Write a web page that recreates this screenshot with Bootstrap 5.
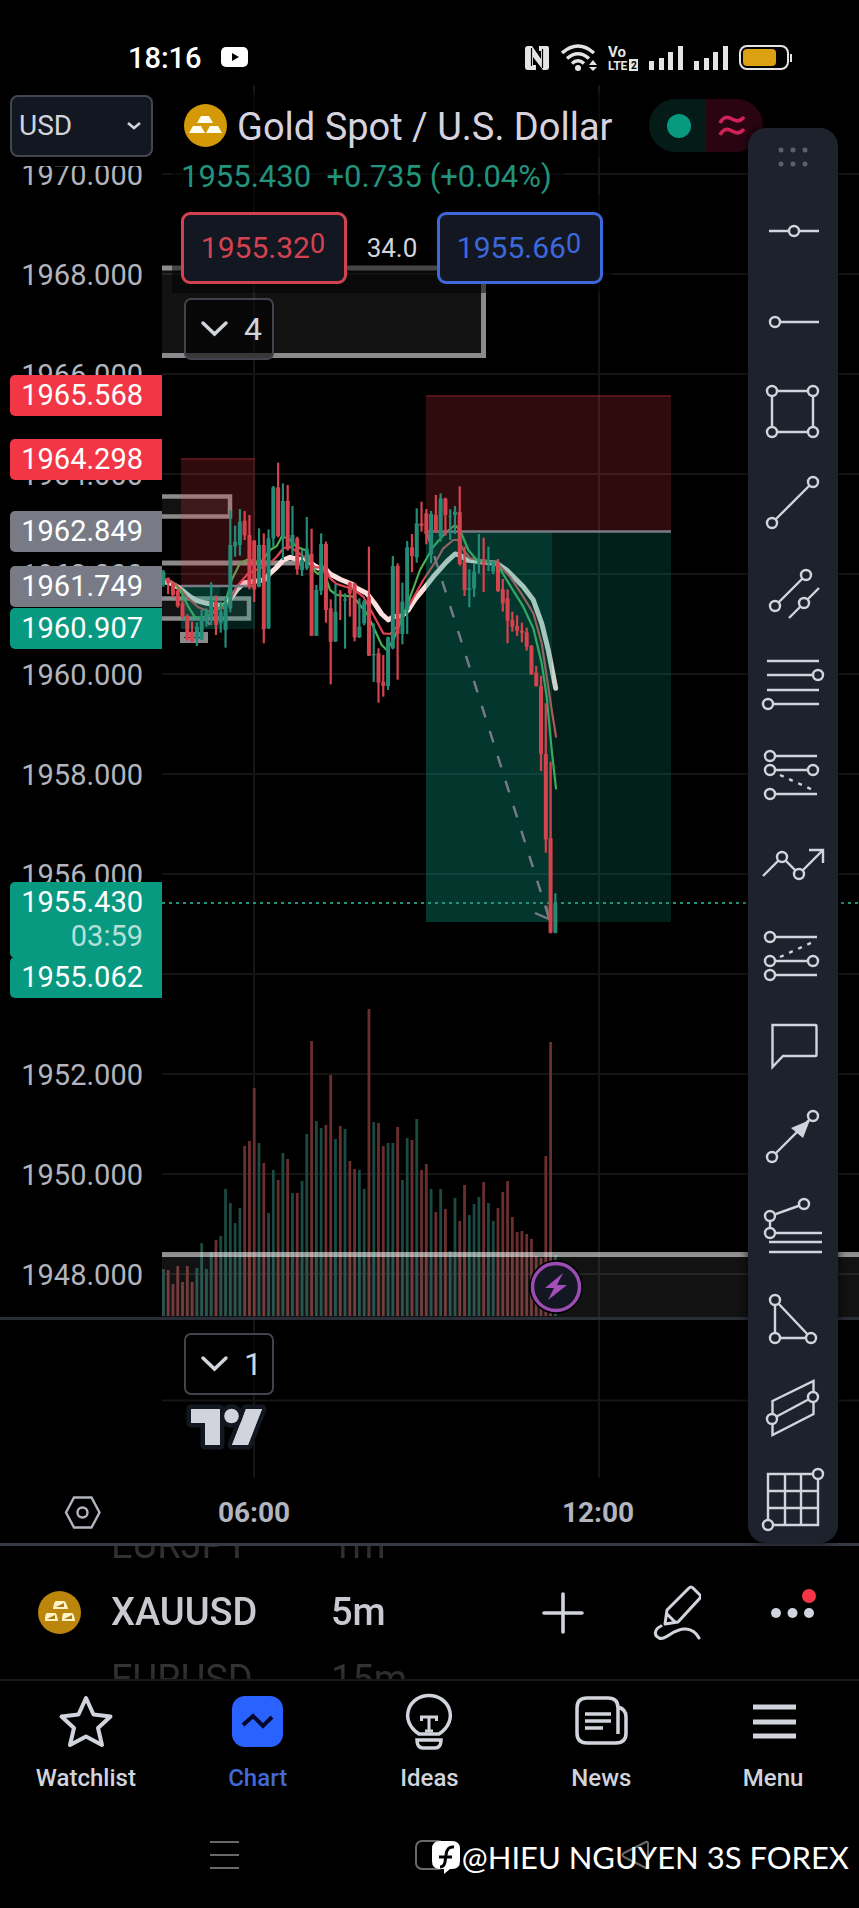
<!DOCTYPE html>
<html lang="en" data-bs-theme="dark">
<head>
<meta charset="utf-8">
<meta name="viewport" content="width=device-width, initial-scale=1">
<title>XAUUSD 5m – Gold Spot / U.S. Dollar</title>
<link href="https://cdn.jsdelivr.net/npm/bootstrap@5.3.0/dist/css/bootstrap.min.css" rel="stylesheet">
<style>
  :root { --axis: 162px; --fg: #d1d4dc; --muted: #b2b5be; --up: #089981; --down: #f23645; --line: #363a45; --panel: #1e222d; --ink: #131722; }
  body { background: #000; color: var(--fg); font-family: Roboto, "Liberation Sans", sans-serif; overflow-x: hidden; }
  svg { display: block; flex: none; }
  .ln { fill: none; stroke: currentColor; }
  button { color: inherit; }

  .status-bar { height: 85px; padding: 30px 66px 0 128px; color: #e4e4e4; }
  .status-bar time { font-size: 29px; font-weight: 500; color: #fff; line-height: 36px; }
  .status-icons { gap: 11px; }

  .price-axis { width: var(--axis); flex: none; font-size: 29px; color: var(--muted); }
  .currency { padding: 10px 9px 9px 10px; }
  .currency select { height: 62px; border: 2px solid #434651; border-radius: 8px; background-color: var(--ink); color: var(--fg); font-size: 28px; line-height: 36px; padding: 10px 30px 10px 7px;
    background-image: url("data:image/svg+xml,%3Csvg xmlns='http://www.w3.org/2000/svg' viewBox='0 0 16 16'%3E%3Cpath d='M2 5l6 5 6-5' fill='none' stroke='%23d1d4dc' stroke-width='2.6'/%3E%3C/svg%3E"); background-position: right 9px center; background-size: 16px; }
  .ticks { overflow: hidden; }
  .ticks ol { margin-top: -41px; margin-bottom: -8px; }
  .ticks li { height: 100px; line-height: 100px; padding-right: 19px; text-align: right; }
  .tag { position: absolute; left: 10px; right: 0; padding-right: 19px; line-height: 41px; text-align: right; border-radius: 5px 0 0 5px; color: #fff; }
  .tag-down { background: var(--down); } .tag-up { background: var(--up); } .tag-flat { background: #787b86; }
  .tag small { display: block; font-size: 29px; line-height: 27px; padding-bottom: 8px; color: #b5e0d9; }

  .plot { padding-left: 10px; overflow: hidden; }
  .plot > .canvas { position: absolute; inset: 0; width: 100%; height: 100%; }
  .legend { position: relative; }
  .legend-row { width: fit-content; background: rgba(0,0,0,.5); }
  .title-row { height: 65px; margin-top: 8px; padding-left: 12px; gap: 10px; }
  .title-row h1 { font-size: 38px; font-weight: 400; line-height: 44px; padding-top: 2px; color: #d6d3df; white-space: nowrap; }
  .quote-row { height: 36px; line-height: 38px; padding: 0 12px 0 9px; font-size: 31px; color: #22937c; white-space: pre; }
  .trade-row { padding: 18px 10px 9px 9px; }
  .trade { width: 166px; height: 72px; border: 3px solid; border-radius: 9px; background: var(--ink); font-size: 30px; padding: 0 2px 2px 0; }
  .trade span { font-size: 27px; vertical-align: 5px; line-height: 20px; }
  .trade-sell { color: #d3434f; } .trade-buy { color: #3d68dc; }
  .spread { width: 90px; font-size: 26px; text-align: center; }
  .pill { margin-left: 26px; border-radius: 27px; overflow: hidden; height: 53px; }
  .pill span { width: 57px; }
  .pill-open { background: #041b17; padding-left: 4px; } .pill-data { background: #2a0411; padding-right: 4px; }
  .fold { width: 90px; height: 62px; border: 2px solid #41444e; border-radius: 7px; font-size: 32px; background: rgba(0,0,0,.6); padding: 0 10px 0 14px; }
  .fold-top { margin: 5px 0 0 12px; }

  .pane-main { min-height: 1231px; }
  .pane-sub { border-top: 3px solid #2a2e39; min-height: 159px; }
  .fold-sub { position: relative; margin: 13px 0 0 12px; }
  .brand { position: relative; margin: 7px 0 0 12px; }
  .time-axis { height: 65px; font-size: 28px; font-weight: 700; color: var(--muted); padding: 4px 0 0 64px; line-height: 36px; }
  .time-axis time { width: 344px; text-align: center; }
  .time-axis svg { margin-right: -19px; }

  .tools { position: absolute; top: 43px; bottom: 0; right: 21px; width: 90px; border-radius: 18px; background: var(--panel); box-shadow: 0 0 10px rgba(0,0,0,.8); overflow: hidden; }
  .grip { height: 58px; padding-top: 18px; }
  .tools button { flex: 1 1 0; min-height: 0; border: 0; background: none; padding: 0; color: #d1d4dc; display: flex; align-items: center; justify-content: center; }
  .tools button svg { fill: none; stroke: currentColor; stroke-width: 2.4; }
  .tools circle { r: 5px; fill: var(--panel); }

  .quick { height: 136px; border-top: 3px solid var(--line); }
  .quick button { border: 0; background: none; padding: 0; }
  .quick-logo { margin: 0 30px 0 38px; }
  .quick-actions { padding: 0 43px 0 30px; }
  .wheel { height: 133px; overflow: hidden; font-size: 38px; color: #4d4d4d; -webkit-mask-image: linear-gradient(transparent -50%, #000 40%, #000 60%, transparent 150%); mask-image: linear-gradient(transparent -50%, #000 40%, #000 60%, transparent 150%); }
  .wheel ul { margin-top: -34px; margin-bottom: 0; }
  .wheel li { height: 67px; line-height: 67px; }
  .wheel .on { color: #c9c9d0; font-weight: 500; }
  .w-sym { width: 220px; }
  .w-int { width: 181px; }

  .tabs { border-top: 2px solid #14171e; height: 129px; padding-top: 10px; }
  .tabs a { color: var(--fg); text-decoration: none; font-size: 24px; font-weight: 500; line-height: 30px; gap: 8px; }
  .tabs a.current { color: #4169d8; }
  .sys { height: 100px; padding: 2px 9px 8px 210px; gap: 176px; color: #696969; }
  .sys button { border: 0; background: none; padding: 0; color: inherit; }
  .handle { position: absolute; right: 10px; top: 25px; color: #fff; font-family: Lato, sans-serif; font-size: 31px; line-height: 48px; white-space: nowrap; }
</style>
</head>
<body class="d-flex flex-column min-vh-100">

<header class="status-bar d-flex align-items-center">
  <time>18:16</time>
  <svg class="ms-3" width="30" height="21" viewBox="0 0 30 21"><rect x="3" width="27" height="20" rx="5" fill="#fff"/><path d="M14 6l7 4-7 4z" fill="#000"/></svg>
  <div class="status-icons d-flex align-items-center ms-auto">
    <svg width="26" height="26" viewBox="0 0 26 26"><path fill="currentColor" d="M4 1h4l9 13V6h-2V1h8q2 0 2 2v19q0 3-3 3h-3L9 12v8h3v5H4q-3 0-3-3V4q0-3 3-3z"/><path d="M7.500 3v18M18.500 4v19" stroke="#000" stroke-width="1.200"/></svg>
    <svg width="36" height="28" viewBox="0 0 36 28"><g class="ln" stroke-width="3.400"><path d="M1 9Q17-5 33 9M6 14.500Q17 5 28 14.500M11 19.500q6-5.500 12 0"/></g><circle cx="17" cy="24" r="3" fill="currentColor"/><path fill="currentColor" d="M28 21l4-5 4 5zM28 23h8l-4 4z"/></svg>
    <svg width="30" height="26" viewBox="0 0 30 26" fill="currentColor" font-family="'Liberation Sans Narrow', Roboto, sans-serif" font-weight="700"><text x="0" y="12" font-size="15">Vo</text><text x="0" y="25" font-size="12">LTE</text><rect x="21" y="14" width="9" height="12"/><text x="23" y="24" font-size="10" fill="#000">2</text></svg>
    <svg width="34" height="26" viewBox="0 0 34 26" fill="currentColor"><path d="M0 16h5v9H0zM10 13h5v12h-5zM19 7h5v18h-5zM29 1h5v24h-5z"/></svg>
    <svg width="34" height="26" viewBox="0 0 34 26" fill="currentColor"><path d="M0 16h5v9H0zM10 13h5v12h-5zM19 7h5v18h-5zM29 1h5v24h-5z"/></svg>
    <svg width="54" height="26" viewBox="0 0 54 26"><rect x="1" y="1" width="48" height="23" rx="7" class="ln" stroke-width="2"/><rect x="4" y="4" width="33" height="17" rx="4" fill="#dca112"/><path d="M52 9v8" stroke="currentColor" stroke-width="2"/></svg>
  </div>
</header>

<main class="d-flex flex-column flex-grow-1 position-relative">
  <section class="pane-main d-flex">
    <div class="price-axis position-relative">
      <div class="currency"><label class="visually-hidden" for="cur">Currency</label><select id="cur" class="form-select"><option>USD</option></select></div>
      <div class="ticks"><ol class="list-unstyled" id="ticks"></ol></div>
      <div id="tags"></div>
    </div>
    <div class="plot flex-fill position-relative">
      <svg class="canvas" aria-label="Price and volume chart">
        <g transform="translate(-162 -85)">
          <path id="grid" stroke="#151516" stroke-width="2" fill="none"/>
          <g id="volume"></g>
          <g fill="#fff" fill-opacity=".07" stroke="#8b8b8b" stroke-width="5">
            <path d="M100 268h383.500v87.500H100z"/>
            <path d="M100 496.500h130v20H100zM100 598.500h149v20H100z" stroke-width="4.500"/>
            <path d="M100 1254.500h2000v200H100z" stroke="#fff" stroke-opacity=".55"/>
            <path d="M162 563H303"/>
          </g>
          <path d="M180 637.500h28" stroke="#8b8b8b" stroke-width="11"/><path d="M184 637.500h17" stroke="#222"/>
          <g id="averages" fill="none" stroke-linejoin="round" stroke-linecap="round"></g>
          <path fill="#f23645" fill-opacity=".2" d="M181 458h74v127h-74zM426 395h245v136H426z"/>
          <path stroke="#f23645" stroke-opacity=".2" stroke-width="2" d="M181 459h74M426 396h245"/>
          <path fill="#089981" fill-opacity=".2" d="M181 587h74v42h-74zM426 532h245v390H426z"/>
          <path fill="#089981" fill-opacity=".2" d="M181 587h39v42h-39zM426 532h126v390H426z"/>
          <path stroke="#787b86" stroke-width="2.500" d="M181 586h74M426 531.500h245"/>
          <g stroke="#787b86" stroke-width="2.400" fill="none"><path d="M427 533L549 918" stroke-dasharray="12 14.200" stroke-dashoffset="2"/><path d="M535 913l14 6-3-13M204 617l6 8"/></g>
          <g id="candles"></g>
          <path d="M162 903H2000" stroke="#25917b" stroke-width="2" stroke-dasharray="3 4"/>
          <circle cx="556" cy="1287" r="27" fill="#000"/>
          <circle cx="556" cy="1287" r="23.500" fill="#131722" stroke="#9c4db3" stroke-width="3.500"/>
          <path d="M563 1273l-18 15h9l-6 12 19-15h-10z" fill="#a24fba"/>
        </g>
      </svg>
      <div class="legend">
        <div class="title-row legend-row d-flex align-items-center">
          <svg width="43" height="43" viewBox="0 0 43 43"><circle cx="21.500" cy="21.500" r="21.500" fill="#d49a05"/><path fill="#fffdf0" d="M17 12h8l4 7H13zM9 22h8l4 7H5zM26 22h8l4 7H22z"/></svg>
          <h1 class="mb-0">Gold Spot / U.S. Dollar</h1>
          <div class="pill d-flex">
            <span class="pill-open d-flex align-items-center justify-content-center"><svg width="24" height="24"><circle cx="12" cy="12" r="12" fill="#089981"/></svg></span>
            <span class="pill-data d-flex align-items-center justify-content-center"><svg width="28" height="22" viewBox="0 0 28 22"><path d="M2 8C5 2 9 1 14 4s9 2 12-2M2 20c3-6 7-7 12-4s9 2 12-2" fill="none" stroke="#cf2259" stroke-width="3.600"/></svg></span>
          </div>
        </div>
        <div class="quote-row legend-row">1955.430  +0.735 (+0.04%)</div>
        <div class="trade-row legend-row d-flex align-items-center">
          <button class="trade trade-sell" type="button">1955.32<span>0</span></button>
          <div class="spread">34.0</div>
          <button class="trade trade-buy" type="button">1955.66<span>0</span></button>
        </div>
        <button class="fold fold-top d-flex align-items-center justify-content-between" type="button"><svg width="29" height="20" viewBox="0 0 29 20"><path class="ln" stroke-width="3.500" stroke-linecap="round" d="M3 4l11.500 11L26 4"/></svg>4</button>
      </div>
    </div>
  </section>

  <section class="pane-sub d-flex flex-grow-1">
    <div class="price-axis"></div>
    <div class="plot flex-fill position-relative">
      <svg class="canvas"><path stroke="#151516" stroke-width="2" d="M0 80.500H2000M92 0V2000M437 0V2000"/></svg>
      <button class="fold fold-sub d-flex align-items-center justify-content-between" type="button"><svg width="29" height="20" viewBox="0 0 29 20"><path class="ln" stroke-width="3.500" stroke-linecap="round" d="M3 4l11.500 11L26 4"/></svg>1</button>
      <svg class="brand" width="84" height="50" viewBox="0 0 84 50"><g fill="#d1d4dc" stroke="#131722" stroke-width="9" paint-order="stroke" stroke-linejoin="round"><path d="M7 7h29v36H21V21H7z"/><path d="M62 7h16L64 43H48z"/><circle cx="47.500" cy="14" r="7.300"/></g><path fill="#d1d4dc" d="M7 7h29v36H21V21H7zM62 7h16L64 43H48z"/></svg>
    </div>
  </section>
  <div class="time-axis d-flex align-items-center">
    <svg width="37" height="33" viewBox="0 0 37 33"><g class="ln" stroke-width="2.400" stroke="#d1d4dc"><path d="M10 1.500h17.500l8 15-8 15H10l-8-15z"/><circle cx="18.500" cy="16.500" r="5"/></g></svg>
    <time>06:00</time><time>12:00</time>
  </div>

  <aside class="tools d-flex flex-column" aria-label="Drawing tools">
    <div class="grip d-flex justify-content-center"><svg width="32" height="22" viewBox="0 0 32 22"><path stroke="#5d606b" stroke-width="5" stroke-linecap="round" d="M4 4h0M16 4h0M28 4h0M4 18h0M16 18h0M28 18h0"/></svg></div>
    <button type="button" aria-label="Horizontal line"><svg width="68" height="90"><path d="M10 45h50"/><circle cx="35" cy="45"/></svg></button>
    <button type="button" aria-label="Horizontal ray"><svg width="68" height="90"><path d="M16 45h44"/><circle cx="16" cy="45"/></svg></button>
    <button type="button" aria-label="Rectangle"><svg width="68" height="90"><path d="M13 24h41v41H13z"/><circle cx="13" cy="24"/><circle cx="54" cy="24"/><circle cx="13" cy="65"/><circle cx="54" cy="65"/></svg></button>
    <button type="button" aria-label="Trend line"><svg width="68" height="90"><path d="M13 65l41-41"/><circle cx="13" cy="65"/><circle cx="54" cy="24"/></svg></button>
    <button type="button" aria-label="Parallel channel"><svg width="68" height="90"><path d="M16 58l31-31M30 70l30-30"/><circle cx="16" cy="58"/><circle cx="47" cy="27"/><circle cx="45" cy="55"/></svg></button>
    <button type="button" aria-label="Fib retracement"><svg width="68" height="90"><path d="M8 22h52M8 36h52M8 51h52M8 65h52"/><circle cx="59" cy="36"/><circle cx="9" cy="65"/></svg></button>
    <button type="button" aria-label="Short position"><svg width="68" height="90"><path d="M11 27h47M11 41h43M11 65h47"/><path d="M21 46l33 15" stroke-dasharray="4 6"/><circle cx="11" cy="27"/><circle cx="11" cy="41"/><circle cx="54" cy="41"/><circle cx="11" cy="65"/></svg></button>
    <button type="button" aria-label="Elliott wave"><svg width="68" height="90"><path d="M4 56l19-19 17 17 24-24M50 30h14v13"/><circle cx="23" cy="37"/><circle cx="40" cy="54"/></svg></button>
    <button type="button" aria-label="Long position"><svg width="68" height="90"><path d="M11 27h47M11 51h43M11 65h47"/><path d="M21 47l33-15" stroke-dasharray="4 6"/><circle cx="11" cy="27"/><circle cx="11" cy="51"/><circle cx="54" cy="51"/><circle cx="11" cy="65"/></svg></button>
    <button type="button" aria-label="Callout"><svg width="68" height="90"><path d="M13.500 67V25h43q1 0 1 1v29q0 1-1 1H24z"/></svg></button>
    <button type="button" aria-label="Arrow"><svg width="68" height="90"><path d="M13 66l41-41"/><path d="M51 29l-19 8 12 10z" fill="currentColor" stroke="none"/><circle cx="13" cy="66"/><circle cx="54" cy="25"/></svg></button>
    <button type="button" aria-label="Fib extension"><svg width="68" height="90"><path d="M45 23l-34 12v17h52M10 61h53M10 71h53"/><circle cx="45" cy="23"/><circle cx="11" cy="35"/><circle cx="11" cy="52"/></svg></button>
    <button type="button" aria-label="Triangle"><svg width="68" height="90"><path d="M16 28v38h36z"/><circle cx="16" cy="28"/><circle cx="16" cy="66"/><circle cx="52" cy="66"/></svg></button>
    <button type="button" aria-label="Disjoint channel"><svg width="68" height="90"><path d="M13.500 39l41-20v33l-41 21zM13 57l41-22"/><circle cx="13" cy="57"/><circle cx="54" cy="35"/></svg></button>
    <button type="button" aria-label="Gann box"><svg width="68" height="90"><path d="M9 21h50v51H9zM26 21v51M42 21v51M9 38h50M9 55h50"/><circle cx="59" cy="21"/><circle cx="9" cy="72"/></svg></button>
  </aside>
</main>

<section class="quick d-flex align-items-center">
  <svg class="quick-logo" width="43" height="43" viewBox="0 0 43 43"><circle cx="21.500" cy="21.500" r="21.500" fill="#bb860b"/><g fill="#fff2c4"><path d="M18 10h8q2 0 4 8H15q1-8 3-8zM9 22h8q2 0 3 8H7q0-8 2-8zM26 22h8q2 0 3 8H24q0-8 2-8z"/></g><path fill="#a97a10" d="M18 16l8-4v4zM9 28l8-4v4zM26 28l8-4v4z"/></svg>
  <div class="wheel w-sym"><ul class="list-unstyled"><li>EURJPY</li><li class="on">XAUUSD</li><li>EURUSD</li></ul></div>
  <div class="wheel w-int"><ul class="list-unstyled"><li>1m</li><li class="on">5m</li><li>15m</li></ul></div>
  <div class="quick-actions d-flex flex-fill justify-content-between align-items-center">
    <button type="button" aria-label="Add"><svg width="42" height="42" viewBox="0 0 42 42"><path class="ln" stroke-width="3.600" stroke-linecap="round" d="M2 21h38M21 2v38"/></svg></button>
    <button type="button" aria-label="Draw"><svg width="50" height="56" viewBox="0 0 50 56"><g class="ln" stroke-width="3" stroke-linejoin="round" stroke-linecap="round"><path d="M38 3q2-2 4 0l7 7q1 2 0 3L27 37l-13 2 2-14zM16 29l8 8M10 41c-6 3-8 9-2 12 7 3 14-10 27-9q9 1 13 9"/></g></svg></button>
    <button type="button" aria-label="More"><svg width="48" height="56" viewBox="0 0 48 56" fill="currentColor"><circle cx="8" cy="28" r="5"/><circle cx="24.500" cy="28" r="5"/><circle cx="41" cy="28" r="5"/><circle cx="41" cy="11" r="7" fill="#f23645"/></svg></button>
  </div>
</section>

<nav class="tabs row g-0 text-center">
  <a class="col d-flex flex-column align-items-center" href="#"><svg width="64" height="64" viewBox="0 0 64 64"><path class="ln" stroke-width="4" stroke-linejoin="round" d="M32 7l7.500 16.500 17 2-12.500 11.500 4 17L32 45.500 16 54l4-17L7.500 25.500l17-2z"/></svg>Watchlist</a>
  <a class="col d-flex flex-column align-items-center current" href="#" aria-current="page"><svg width="64" height="64" viewBox="0 0 64 64"><rect x="6" y="5" width="51" height="51" rx="13" fill="#2962ff"/><path d="M17 34l10-9 10 10 9-9" fill="none" stroke="#05082a" stroke-width="4"/></svg>Chart</a>
  <a class="col d-flex flex-column align-items-center" href="#"><svg width="64" height="64" viewBox="0 0 64 64"><g class="ln" stroke-width="3.500"><path d="M22 43C1 29 12 4.500 32 4.500S63 29 42 43zM20 49h24q0 8-6 8H26q-6 0-6-8z"/><path stroke-width="3" d="M24.500 30v-4h15v4M32 26v15M28 40h8"/></g></svg>Ideas</a>
  <a class="col d-flex flex-column align-items-center" href="#"><svg width="64" height="64" viewBox="0 0 64 64"><g class="ln" stroke-width="3.500"><path d="M49 43V17q0-10-10-10H18Q8 7 8 17v25q0 10 10 10h29q10 0 10-10V26q0-8-8-10M16 23h26M16 30h26M16 37h18"/></g></svg>News</a>
  <a class="col d-flex flex-column align-items-center" href="#"><svg width="64" height="64" viewBox="0 0 64 64"><path class="ln" stroke-width="5" d="M12 16h43M12 31h43M12 45h43"/></svg>Menu</a>
</nav>

<footer class="sys position-relative d-flex align-items-center">
  <button type="button" aria-label="Recent apps"><svg width="29" height="30" viewBox="0 0 29 30"><path class="ln" stroke-width="2" d="M0 2h29M0 15h29M0 28h29"/></svg></button>
  <button type="button" aria-label="Home"><svg width="30" height="30" viewBox="0 0 30 30"><rect class="ln" stroke-width="2" x="1" y="1" width="28" height="28" rx="6"/></svg></button>
  <button type="button" aria-label="Back"><svg width="28" height="30" viewBox="0 0 28 30"><path class="ln" stroke-width="2" stroke-linejoin="round" d="M25 2q2-1 2 2v22q0 3-2 2L3 17q-3-2 0-4z"/></svg></button>
  <div class="handle d-flex align-items-center"><svg width="32" height="36" viewBox="0 0 32 36"><path fill="#fff" d="M10 2h12q8 0 8 8v12q0 8-8 8h-2l-6 5v-5h-4q-8 0-8-8V10q0-8 8-8z"/><path d="M24 8q-7-1-8 8l-1 7q-1 5-5 5M9 18h13" fill="none" stroke="#000" stroke-width="3"/></svg>@HIEU NGUYEN 3S FOREX</div>
</footer>

<script src="https://cdn.jsdelivr.net/npm/bootstrap@5.3.0/dist/js/bootstrap.bundle.min.js"></script>
<script>
const $ = id => document.getElementById(id);
const barX = i => 163.4 + 4.78 * i;

// price scale: one tick every 2.0, 100px apart
for (let p = 1970; p >= 1948; p -= 2) $('ticks').insertAdjacentHTML('beforeend', `<li>${p}.000</li>`);
[[1965.568, 'down', 290], [1964.298, 'down', 354], [1962.849, 'flat', 426], [1961.749, 'flat', 481], [1960.907, 'up', 523], [1955.062, 'up', 872], [1955.430, 'up', 797, '03:59']]
  .forEach(([p, kind, top, left]) => $('tags').insertAdjacentHTML('beforeend', `<div class="tag tag-${kind}" style="top:${top}px">${p.toFixed(3)}${left ? `<small>${left}</small>` : ''}</div>`));

// grid
let g = 'M254 85V1400M599 85V1400';
for (let y = 174; y < 1316; y += 100) g += `M162 ${y}H2000`;
$('grid').setAttribute('d', g);

// volume: bar heights, r = down bar, g = up bar
const vol = 'g47 r46 r32 r50 r34 r50 r34 g48 g73 g47 g64 r76 g80 g127 g113 g93 g108 r170 r175 r228 g173 r153 g103 g146 r136 g163 r157 g123 r123 g135 g182 r275 g195 g188 r191 r241 g177 r190 g187 r155 r147 g146 g127 r307 g194 r193 r170 g173 g173 r189 g136 g178 r176 g197 r146 r152 g127 r104 g127 r107 g65 g118 r95 r131 g101 g112 g119 r134 g113 g95 r108 r124 r135 r99 r84 r85 r82 r77 r60 r58 r160 r274 g61'.split(' ');
$('volume').innerHTML = vol.map((v, i) => `<rect x="${barX(i) - 1.4}" y="${1316 - v.slice(1)}" width="2.8" height="${v.slice(1)}" fill="${v[0] === 'r' ? '#6b2e2e' : '#1a4a42'}"/>`).join('');

// candles: high, body top, body bottom, low in thirds of a pixel below y=430
const c = `g420,425,465,470 r442,445,460,492 r455,460,495,502 r475,482,528,533 r512,520,558,565 r553,558,628,632 r575,605,634,637 g577,590,628,648 g540,560,628,630 g535,540,575,590 g457,510,560,585 r496,515,585,615 g515,545,580,608 g505,520,600,653 g240,345,535,547 g287,335,350,380 g237,275,345,377 r243,272,316,330 r255,315,470,478 r330,332,478,516 g295,345,470,472 r310,345,598,640 g298,325,595,597 g168,172,325,350 r98,172,318,322 g160,213,320,390 r165,213,358,362 g228,315,350,375 r320,325,418,434 g360,390,420,438 g261,355,415,420 r296,372,617,618 g465,480,617,618 g310,342,482,495 r335,342,540,578 r508,535,635,763 g462,545,634,636 r480,490,492,570 g490,508,512,656 r455,458,490,560 r458,460,622,634 g505,590,622,624 g510,515,580,586 r350,500,677,678 g580,672,676,756 r655,670,758,818 r675,755,768,800 g620,622,768,780 g378,408,655,658 r400,408,612,749 g458,515,612,643 g333,352,540,612 r312,352,378,427 g235,280,382,398 r215,280,288,305 r237,250,312,343 g243,252,373,400 r195,255,305,308 g190,205,320,335 r203,206,255,317 g238,258,260,330 g228,245,255,312 r169,246,402,407 r350,395,480,498 g418,474,480,532 g400,425,475,501 g312,395,400,430 r323,395,405,486 g350,395,400,423 g395,400,425,432 r387,398,483,486 r447,478,520,545 r478,505,572,640 r545,570,590,605 r556,588,602,618 r578,602,608,637 r593,607,650,662 r645,648,732,735 r708,728,768,770 r738,768,972,1023 r820,972,1228,1268 r995,1225,1508,1510 g1390,1420,1508,1510`.split(' ');
$('candles').innerHTML = c.map((k, i) => {
  const [h, t, b, l] = k.slice(1).split(',').map(n => 430 + n / 3), x = barX(i);
  return `<g fill="${k[0] === 'r' ? '#d5434f' : '#248b77'}"><rect x="${x - 1.1}" y="${h}" width="2.2" height="${l - h}"/><rect x="${x - 2}" y="${t}" width="4" height="${b - t}"/></g>`;
}).join('');

// moving averages, same units as the candles
const ma = [
  ['#ffdede', 5, '10,455 30,458 60,475 90,500 110,512 140,520 190,528 205,515 230,480 250,460 270,455 300,452 315,448 330,430 350,412 370,390 390,382 410,387 440,388 460,405 475,414 495,415 510,432 540,448 575,462 590,475 620,490 645,522 665,552 685,570 700,560 725,558 745,540 765,508 790,478 820,440 860,395 885,372 900,375 920,390 960,395 1010,400 1040,420 1090,470 1120,510 1145,580 1165,660 1187,775'],
  ['#e04450', 2.2, '10,445 25,450 50,465 80,500 115,532 150,545 185,535 205,520 230,470 265,430 300,415 330,400 350,380 370,355 390,350 420,372 440,385 465,412 495,412 510,445 530,462 580,478 610,500 635,545 670,610 690,612 710,590 745,530 790,450 830,390 850,355 880,330 895,330 910,360 930,385 1010,398 1050,440 1090,500 1120,550 1145,640 1160,740 1175,840 1188,920'],
  ['#4caf50', 2.2, '35,455 60,480 85,530 105,562 125,565 160,548 195,520 215,450 240,400 265,388 300,400 330,360 350,348 365,320 385,325 410,350 440,362 465,425 475,432 490,415 510,480 530,495 580,500 620,550 640,590 665,645 680,660 700,630 740,530 780,420 820,350 855,310 885,285 900,300 925,360 950,390 1010,400 1040,450 1090,530 1120,595 1145,700 1160,800 1175,960 1188,1075']
];
$('averages').innerHTML = ma.map(([col, w, pts]) => `<polyline stroke="${col}" stroke-width="${w}" points="${pts.split(' ').map(p => { const [x, y] = p.split(','); return (160 + x / 3).toFixed(1) + ',' + (430 + y / 3).toFixed(1); }).join(' ')}"/>`).join('');
</script>
</body>
</html>
